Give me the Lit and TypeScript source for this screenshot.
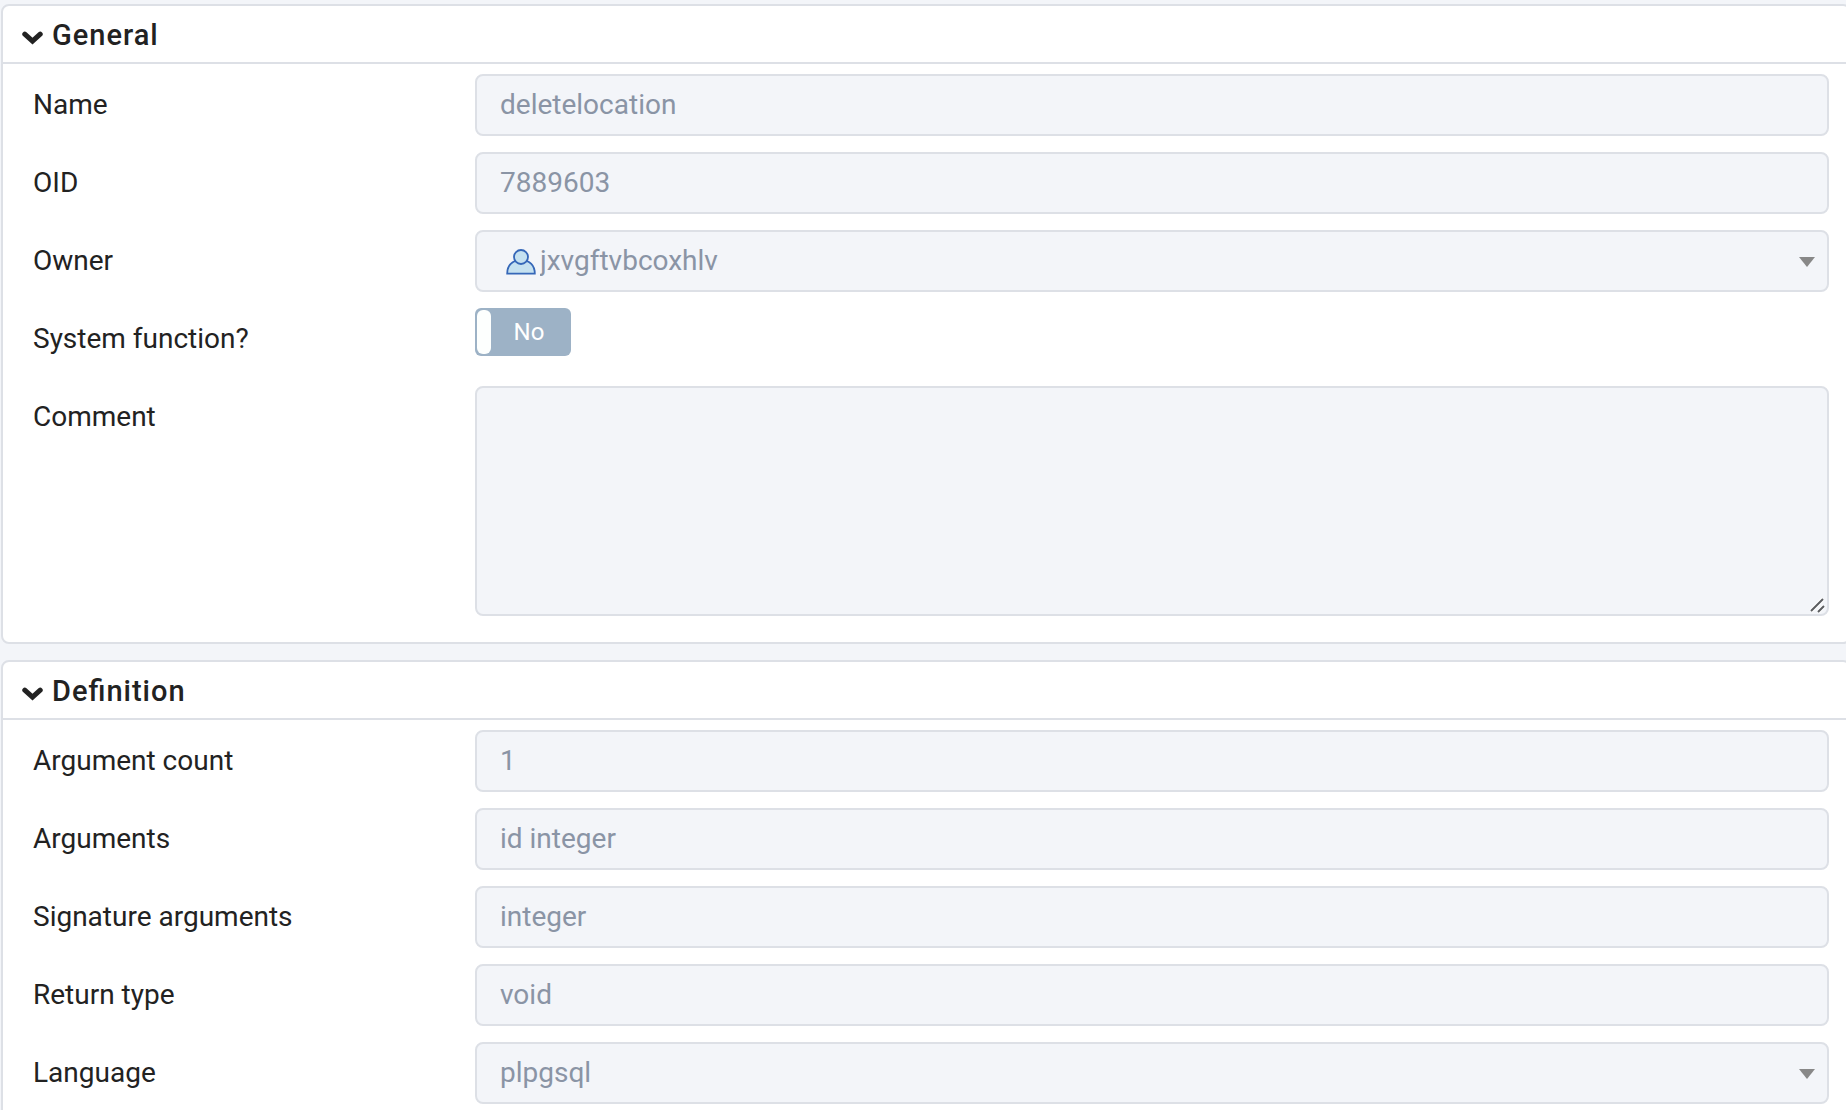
import { LitElement, html, css, svg, nothing } from "lit";
import { customElement, property, state } from "lit/decorators.js";

type Field = {
  id: string;
  label: string;
  kind: "text" | "select" | "role" | "switch" | "multiline";
  value: string;
};

const GENERAL: Field[] = [
  { id: "name", label: "Name", kind: "text", value: "deletelocation" },
  { id: "oid", label: "OID", kind: "text", value: "7889603" },
  { id: "owner", label: "Owner", kind: "role", value: "jxvgftvbcoxhlv" },
  { id: "system", label: "System function?", kind: "switch", value: "No" },
  { id: "comment", label: "Comment", kind: "multiline", value: "" },
];

const DEFINITION: Field[] = [
  { id: "argcount", label: "Argument count", kind: "text", value: "1" },
  { id: "args", label: "Arguments", kind: "text", value: "id integer" },
  { id: "sigargs", label: "Signature arguments", kind: "text", value: "integer" },
  { id: "rettype", label: "Return type", kind: "text", value: "void" },
  { id: "language", label: "Language", kind: "select", value: "plpgsql" },
];

@customElement("property-panel")
export class PropertyPanel extends LitElement {
  @property() heading = "";
  @property({ attribute: false }) fields: Field[] = [];
  @state() private open = true;

  static styles = css`
    :host {
      display: block;
      background: #fff;
      border: 2px solid #dde0e6;
      border-radius: 8px;
    }
    .heading {
      margin: 0;
      font: inherit;
    }
    .toggle {
      display: flex;
      align-items: center;
      gap: 9px;
      width: 100%;
      height: 56px;
      padding: 2px 19px 0;
      border: 0;
      background: none;
      color: #222;
      font: 500 29px/32px Roboto, sans-serif;
      letter-spacing: 1px;
      font-feature-settings: "liga" 1;
      text-align: left;
      cursor: pointer;
    }
    .chevron {
      width: 21px;
      height: 14px;
      margin-top: 6px;
      fill: none;
      stroke: currentColor;
      stroke-width: 5;
    }
    .closed {
      transform: rotate(-90deg);
    }
    .body {
      display: flex;
      flex-direction: column;
      gap: 16px;
      padding: 10px 20px 26px 30px;
      border-top: 2px solid #dde0e6;
    }
    .row {
      display: grid;
      grid-template-columns: 442px minmax(0, 1fr);
      min-height: 62px;
    }
    .label {
      line-height: 62px;
    }
    .control {
      position: relative;
      display: flex;
      align-items: flex-start;
    }
    .field {
      box-sizing: border-box;
      width: 100%;
      height: 62px;
      margin: 0;
      padding: 0 23px;
      border: 2px solid #dde0e6;
      border-radius: 8px;
      background: #f3f5f9;
      color: #8a94a5;
      font: 400 28px/32px Roboto, sans-serif;
      opacity: 1;
      appearance: none;
      outline: none;
    }
    .text {
      padding-bottom: 2px;
    }
    .role {
      padding-left: 63px;
    }
    .area {
      height: 230px;
      padding: 12px 23px;
      resize: none;
    }
    .person,
    .caret,
    .grip {
      position: absolute;
      pointer-events: none;
    }
    .person {
      left: 31px;
      top: 19px;
      width: 30px;
      height: 26px;
    }
    .caret {
      right: 14px;
      top: 27px;
      width: 16px;
      height: 10px;
    }
    .grip {
      right: 4px;
      bottom: 3px;
      width: 16px;
      height: 16px;
    }
    .switch {
      position: relative;
      display: flex;
      box-sizing: border-box;
      width: 96px;
      height: 48px;
      padding: 2px;
      border-radius: 6px;
      background: #9db2c6;
      color: #fff;
      font-size: 24px;
      line-height: 44px;
    }
    .check {
      position: absolute;
      inset: 0;
      width: 100%;
      height: 100%;
      margin: 0;
      opacity: 0;
    }
    .handle {
      width: 14px;
      border-radius: 6px;
      background: #fdfffe;
    }
    .state {
      flex: 1;
      padding-right: 2px;
      text-align: center;
    }
  `;

  private caret() {
    return html`<svg class="caret" viewBox="0 0 16 10" aria-hidden="true">
      <path d="M0 0H16L8 10Z" fill="#888"></path>
    </svg>`;
  }

  private control(f: Field) {
    switch (f.kind) {
      case "text":
        return html`<input class="field text" id=${f.id} type="text" .value=${f.value} disabled />`;
      case "select":
        return html`<select class="field" id=${f.id} disabled>
            <option>${f.value}</option></select
          >${this.caret()}`;
      case "role":
        return html`<select class="field role" id=${f.id} disabled>
            <option>${f.value}</option>
          </select>
          <svg class="person" viewBox="0 0 30 26" aria-hidden="true">
            ${svg`<path d="M1.2 24.6C1.2 16.4 6 11.2 15 11.2S28.8 16.4 28.8 24.6Z"
              fill="#c5e1f0" stroke="#3567b8" stroke-width="1.8"></path>
            <circle cx="15" cy="8" r="7" fill="#c5e1f0" stroke="#3567b8" stroke-width="1.8"></circle>`}
          </svg>
          ${this.caret()}`;
      case "switch":
        return html`<span class="switch">
          <input class="check" id=${f.id} type="checkbox" role="switch" disabled />
          <span class="handle"></span><span class="state">${f.value}</span>
        </span>`;
      case "multiline":
        return html`<textarea class="field area" id=${f.id} disabled .value=${f.value}></textarea>
          <svg class="grip" viewBox="0 0 16 16" aria-hidden="true">
            <path d="M2 14L14 2M9 15L15 9" fill="none" stroke="#fff" stroke-width="4"></path>
            <path d="M2 14L14 2M9 15L15 9" fill="none" stroke="#5c5e61" stroke-width="2"></path>
          </svg>`;
    }
  }

  render() {
    return html`
      <h2 class="heading">
        <button
          class="toggle"
          type="button"
          aria-expanded=${this.open ? "true" : "false"}
          @click=${() => (this.open = !this.open)}
        >
          <svg class="chevron ${this.open ? "" : "closed"}" viewBox="0 0 21 14" aria-hidden="true">
            <path d="M2.8 3.2L10.5 10.2L18.2 3.2" stroke-linecap="round"></path>
          </svg>
          <span>${this.heading}</span>
        </button>
      </h2>
      ${this.open
        ? html`<div class="body">
            ${this.fields.map(
              (f) => html`<div class="row">
                <label class="label" for=${f.id}>${f.label}</label>
                <div class="control">${this.control(f)}</div>
              </div>`
            )}
          </div>`
        : nothing}
    `;
  }
}

@customElement("app-root")
export class AppRoot extends LitElement {
  static styles = css`
    :host {
      display: block;
      height: 100vh;
      overflow: hidden;
      background: #f3f5f9;
      color: #222;
      font: 400 28px/32px Roboto, sans-serif;
    }
    .panels {
      display: flex;
      flex-direction: column;
      gap: 16px;
      margin-right: -5px;
      padding: 4px 0 16px 1px;
    }
  `;

  render() {
    return html`<main class="panels">
      <property-panel heading="General" .fields=${GENERAL}></property-panel>
      <property-panel heading="Definition" .fields=${DEFINITION}></property-panel>
    </main>`;
  }
}
